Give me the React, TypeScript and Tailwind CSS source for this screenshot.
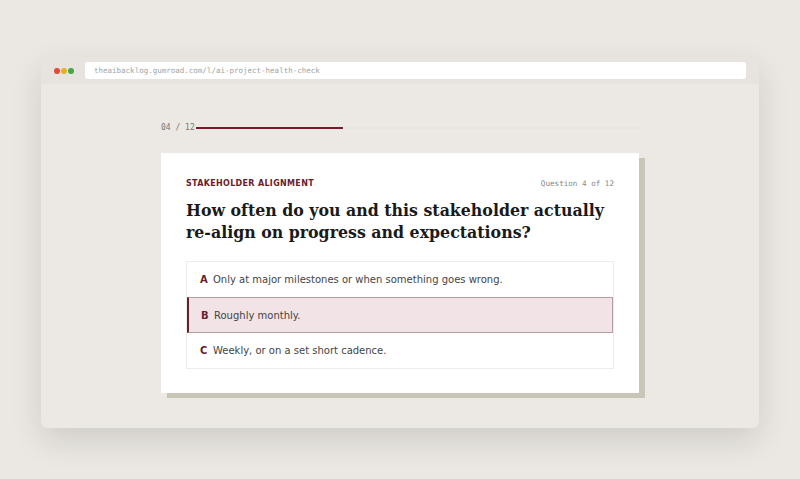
const options = [
  { key: 'A', label: 'Only at major milestones or when something goes wrong.' },
  { key: 'B', label: 'Roughly monthly.' },
  { key: 'C', label: 'Weekly, or on a set short cadence.' },
];

const selected = 'B';

export default function App() {
  return (
    <div className="h-[479px] w-[800px] bg-[#ebe8e3] pt-[57px] pl-[41px] font-['DejaVu_Sans',sans-serif]">
      <div className="w-[718px] overflow-hidden rounded-md bg-[#ece9e4] shadow-[0_12px_32px_rgba(0,0,0,0.12)]">
        <div className="flex h-[27px] items-center bg-[#e7e4df] pl-[13px] pr-[13px]">
          <div className="flex gap-[1px]">
            <span className="h-[6px] w-[6px] rounded-full bg-[#e8453c]" />
            <span className="h-[6px] w-[6px] rounded-full bg-[#e5b121]" />
            <span className="h-[6px] w-[6px] rounded-full bg-[#3fa748]" />
          </div>
          <div className="ml-[11px] flex h-[17px] flex-1 items-center rounded-[3px] bg-white pl-[9px] font-['DejaVu_Sans_Mono',monospace] text-[7.5px] text-[#a3a3a3]">
            theaibacklog.gumroad.com/l/ai-project-health-check
          </div>
        </div>
        <div className="h-[344px] pt-[38px] pl-[120px]">
          <div className="flex w-[478px] items-center gap-[1px]">
            <span className="font-['DejaVu_Sans_Mono',monospace] text-[8px] text-[#777]">04 / 12</span>
            <div className="h-[2px] flex-1 bg-[#e8e5e0]">
              <div className="h-full bg-[#7a1a2c]" style={{ width: `${(4 / 12) * 100}%` }} />
            </div>
          </div>
          <div className="mt-[19px] w-[478px] bg-white px-[25px] pt-[25px] pb-[24px] shadow-[6px_5px_0_#c9c6b8]">
            <div className="flex items-center justify-between">
              <span className="text-[8px] font-bold tracking-[0.04em] text-[#6b1d2c]">STAKEHOLDER ALIGNMENT</span>
              <span className="font-['DejaVu_Sans_Mono',monospace] text-[7.6px] text-[#888]">Question 4 of 12</span>
            </div>
            <h1 className="mt-[10px] font-['DejaVu_Serif',serif] text-[15.8px] leading-[22px] font-bold text-[#1a1a1a]">
              How often do you and this stakeholder actually re-align on progress and expectations?
            </h1>
            <div className="mt-[17px] border border-[#eeecea]">
              {options.map((o) => {
                const active = o.key === selected;
                return (
                  <div
                    key={o.key}
                    className={
                      active
                        ? 'flex h-[36px] items-center border-y border-r border-y-[#b59ca2] border-r-[#b59ca2] border-l-2 border-l-[#6b1d2c] bg-[#f2e3e6] pl-[12px] text-[10px] text-[#444]'
                        : 'flex h-[35px] items-center pl-[13px] text-[10px] text-[#444]'
                    }
                  >
                    <span className="w-[13px] text-[10px] font-bold text-[#6b1d2c]">{o.key}</span>
                    <span>{o.label}</span>
                  </div>
                );
              })}
            </div>
          </div>
        </div>
      </div>
    </div>
  );
}
